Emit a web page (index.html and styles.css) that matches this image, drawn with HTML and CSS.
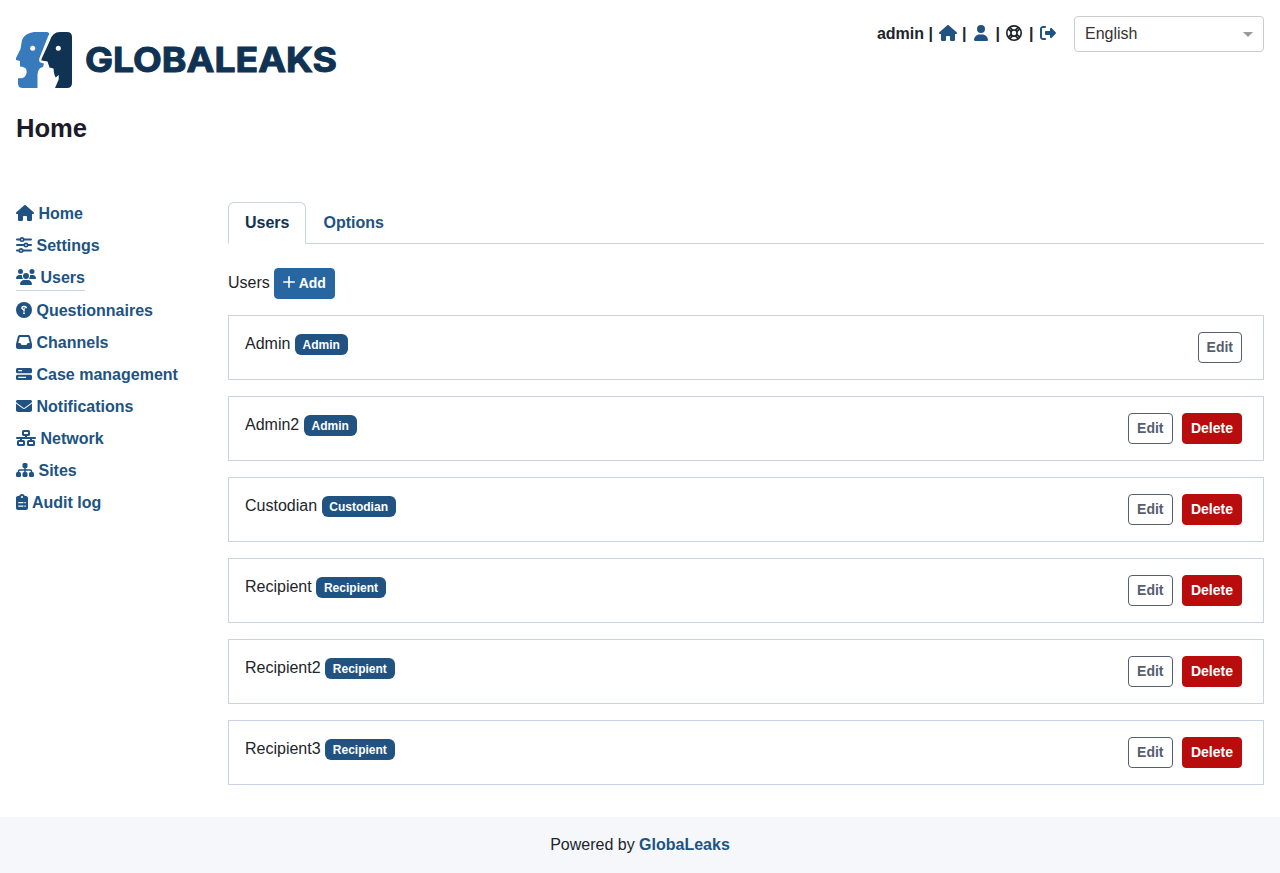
FILE: index.html
```html
<!DOCTYPE html>
<html lang="en">
<head>
<meta charset="utf-8">
<title>GlobaLeaks</title>
<link rel="stylesheet" href="styles.css">
</head>
<body>
<svg class="sprite" aria-hidden="true">
  <symbol id="house" viewBox="0 0 576 512"><path d="M575.8 255.5c0 18-15 32.1-32 32.1h-32l.7 160.2c0 2.7-.2 5.4-.5 8.1V472c0 22.1-17.9 40-40 40H392c-22.1 0-40-17.9-40-40V384c0-17.7-14.3-32-32-32H256c-17.7 0-32 14.3-32 32v88c0 22.1-17.9 40-40 40H104c-22.1 0-40-17.9-40-40V287.600H32c-18 0-32-14-32-32.100c0-9 3-17 10-24L266.400 8c7-7 15-8 22-8s15 2 21 7L564.800 231.500c8 7 12 15 11 24z"/></symbol>
  <symbol id="user" viewBox="0 0 448 512"><path d="M224 256A128 128 0 1 0 224 0a128 128 0 1 0 0 256zm-45.700 48C79.800 304 0 383.800 0 482.300C0 498.700 13.300 512 29.700 512H418.300c16.400 0 29.700-13.300 29.700-29.700C448 383.800 368.200 304 269.700 304H178.300z"/></symbol>
  <symbol id="ring" viewBox="0 0 512 512"><g fill="none" stroke="currentColor" stroke-width="52"><circle cx="256" cy="256" r="230"/><circle cx="256" cy="256" r="98"/><path d="M76 122l96 96M122 76l96 96M436 122l-96 96M390 76l-96 96M76 390l96-96M122 436l96-96M436 390l-96-96M390 436l-96-96"/></g></symbol>
  <symbol id="logout" viewBox="0 0 512 512"><path d="M377.900 105.900L500.700 228.700c7.200 7.200 11.300 17.100 11.300 27.300s-4.100 20.100-11.300 27.300L377.900 406.100c-6.400 6.400-15 9.900-24 9.900c-18.700 0-33.900-15.200-33.900-33.900v-62.100H192c-17.700 0-32-14.300-32-32v-64c0-17.700 14.300-32 32-32h128v-62.100c0-18.700 15.200-33.900 33.900-33.900c9 0 17.600 3.600 24 9.900zM160 96H96c-17.700 0-32 14.300-32 32v256c0 17.700 14.300 32 32 32h64c17.700 0 32 14.300 32 32s-14.300 32-32 32H96c-53 0-96-43-96-96V128C0 75 43 32 96 32h64c17.700 0 32 14.300 32 32s-14.300 32-32 32z"/></symbol>
  <symbol id="sliders" viewBox="0 0 512 512"><g fill="none" stroke="currentColor" stroke-width="62" stroke-linecap="round"><path d="M31 80h105M248 80h233M31 256h233M376 256h105M31 432h73M216 432h265"/><g stroke-width="52"><circle cx="192" cy="80" r="54"/><circle cx="320" cy="256" r="54"/><circle cx="160" cy="432" r="54"/></g></g></symbol>
  <symbol id="users" viewBox="0 0 640 512"><path d="M144 0a80 80 0 1 1 0 160A80 80 0 1 1 144 0zM512 0a80 80 0 1 1 0 160A80 80 0 1 1 512 0zM0 298.700C0 239.800 47.800 192 106.700 192h42.700c15.900 0 31 3.500 44.600 9.700c-1.300 7.200-1.900 14.700-1.900 22.300c0 38.200 16.800 72.500 43.300 96H21.300C9.600 320 0 310.400 0 298.700zM405.300 320c26.600-23.500 43.300-57.800 43.300-96c0-7.600-.7-15-1.900-22.300c13.600-6.300 28.700-9.700 44.600-9.700h42.700C592.200 192 640 239.800 640 298.700c0 11.800-9.600 21.300-21.300 21.300zM224 224a96 96 0 1 1 192 0 96 96 0 1 1-192 0zM128 485.300C128 411.700 187.700 352 261.300 352h117.400C452.300 352 512 411.700 512 485.300c0 14.700-11.900 26.700-26.700 26.700H154.700c-14.700 0-26.700-11.900-26.700-26.700z"/></symbol>
  <symbol id="question" viewBox="0 0 512 512"><circle cx="256" cy="256" r="256"/><path d="M330 180q-12-34-52-34h-40q-48 0-48 42 0 26 29 40l37 20v40" fill="none" stroke="#fff" stroke-width="46" stroke-linecap="round"/><path d="M250 200h50" stroke="#fff" stroke-width="30"/><circle cx="256" cy="356" r="30" fill="#fff"/></symbol>
  <symbol id="inbox" viewBox="0 0 512 512"><path fill-rule="evenodd" d="M121 32C91.600 32 66 52 58.900 80.500L1.900 308.400C.6 313.500 0 318.700 0 323.900V416c0 35.300 28.700 64 64 64h384c35.300 0 64-28.700 64-64v-92.100c0-5.200-.6-10.400-1.900-15.500l-57-227.900C446 52 420.400 32 391 32zm0 64h270l48 192h-51.200c-12.100 0-23.200 6.800-28.600 17.700l-14.300 28.600c-5.400 10.800-16.500 17.700-28.600 17.700H195.800c-12.100 0-23.200-6.800-28.600-17.700l-14.300-28.600c-5.400-10.800-16.500-17.700-28.600-17.700H73z"/></symbol>
  <symbol id="bars" viewBox="0 0 512 512"><path fill-rule="evenodd" d="M48 64H464q48 0 48 48v72q0 48-48 48H48q-48 0-48-48v-72q0-48 48-48zM72 128v40h120v-40zM48 280H464q48 0 48 48v72q0 48-48 48H48q-48 0-48-48v-72q0-48 48-48zM72 344v40h248v-40z"/></symbol>
  <symbol id="mail" viewBox="0 0 512 512"><path d="M48 64C21.500 64 0 85.500 0 112c0 15.100 7.100 29.300 19.200 38.400l217.600 163.200c11.400 8.500 27 8.500 38.400 0l217.600-163.200c12.100-9.100 19.200-23.300 19.200-38.400c0-26.500-21.500-48-48-48zM0 176v208c0 35.300 28.700 64 64 64h384c35.300 0 64-28.700 64-64V176L294.400 339.200c-22.800 17.100-54 17.100-76.800 0z"/></symbol>
  <symbol id="network" viewBox="0 0 640 512"><g fill="none" stroke="currentColor" stroke-width="64"><rect x="224" y="32" width="192" height="128" rx="20"/><rect x="64" y="352" width="192" height="128" rx="20"/><rect x="384" y="352" width="192" height="128" rx="20"/><path d="M320 160v96M160 350v-94M480 350v-94M32 256h576" stroke-linecap="round"/></g></symbol>
  <symbol id="sitemap" viewBox="0 0 576 512"><rect x="208" y="32" width="160" height="160" rx="48"/><rect x="0" y="320" width="160" height="160" rx="48"/><rect x="208" y="320" width="160" height="160" rx="48"/><rect x="416" y="320" width="160" height="160" rx="48"/><path d="M288 180v150M80 330v-34q0-40 40-40h336q40 0 40 40v34" fill="none" stroke="currentColor" stroke-width="48"/></symbol>
  <symbol id="clipboard" viewBox="0 0 384 512"><path fill-rule="evenodd" d="M192 0c-41.800 0-77.400 26.700-90.500 64H64C28.700 64 0 92.700 0 128v320c0 35.300 28.700 64 64 64h256c35.300 0 64-28.700 64-64V128c0-35.300-28.700-64-64-64h-37.500C269.400 26.700 233.800 0 192 0zM192 64a32 32 0 1 1 0 64 32 32 0 1 1 0-64zM72 256h164v36H72zM268 256h44v36h-44zM72 368h164v36H72zM268 368h44v36h-44z"/></symbol>
</svg>

<header class="header">
  <a class="logo"><svg width="322" height="56" viewBox="0 0 322 56">
    <path fill="#377bbc" d="M18 0H30Q35 0 32 4.500L23.300 26.500Q22.500 30.500 26 31L28 31.500L27 35Q22 36 21.500 42V56H7Q2 56 2 51.500V46.500L3 46Q6 47 8.500 45Q12 41 10 37Q9 35 4 34.500V29L0 28V26L4.500 17L6 8Q9 1 18 0Z"/>
    <circle cx="16.700" cy="16.300" r="2.500" fill="#fff"/>
    <path fill="#103253" d="M44 0H51Q56 0 56 5V51Q56 56 51 56H39L42.700 47.500V43L39.700 45.500Q38 43 37.500 36.500L33.500 35.500L31.500 29.500L25.500 28.500V27L33.500 9.500Q36 0 44 0Z"/>
    <circle cx="42.300" cy="16.300" r="2.500" fill="#fff"/>
    <text class="wordmark" x="69" y="40.300" textLength="252" lengthAdjust="spacingAndGlyphs">GLOBALEAKS</text>
  </svg></a>
  <div class="tools">
    <div class="account">
      <span>admin</span><span>|</span><svg class="icon w18 home"><use href="#house"/></svg><span>|</span><svg class="icon person"><use href="#user"/></svg><span>|</span><svg class="icon help"><use href="#ring"/></svg><span>|</span><svg class="icon exit"><use href="#logout"/></svg>
    </div>
    <div class="language"><span>English</span><i class="caret"></i></div>
  </div>
</header>
<h1 class="title">Home</h1>

<div class="layout">
  <nav class="sidebar">
    <a><svg class="icon w18"><use href="#house"/></svg>Home</a>
    <a><svg class="icon"><use href="#sliders"/></svg>Settings</a>
    <a class="current"><svg class="icon w20"><use href="#users"/></svg>Users</a>
    <a><svg class="icon"><use href="#question"/></svg>Questionnaires</a>
    <a><svg class="icon"><use href="#inbox"/></svg>Channels</a>
    <a><svg class="icon"><use href="#bars"/></svg>Case management</a>
    <a><svg class="icon"><use href="#mail"/></svg>Notifications</a>
    <a><svg class="icon w20"><use href="#network"/></svg>Network</a>
    <a><svg class="icon w18"><use href="#sitemap"/></svg>Sites</a>
    <a><svg class="icon w12"><use href="#clipboard"/></svg>Audit log</a>
  </nav>
  <main class="content">
    <div class="tabs"><a class="tab active">Users</a><a class="tab">Options</a></div>
    <div class="heading"><span>Users</span><button class="btn add"><svg class="plus" viewBox="0 0 12 12"><path d="M6 .2v11.600M.2 6h11.600"/></svg>Add</button></div>
    <div class="cards">
      <div class="card"><div class="who">Admin <span class="badge">Admin</span></div><div class="actions"><button class="btn edit">Edit</button></div></div>
      <div class="card"><div class="who">Admin2 <span class="badge">Admin</span></div><div class="actions"><button class="btn edit">Edit</button><button class="btn delete">Delete</button></div></div>
      <div class="card"><div class="who">Custodian <span class="badge">Custodian</span></div><div class="actions"><button class="btn edit">Edit</button><button class="btn delete">Delete</button></div></div>
      <div class="card"><div class="who">Recipient <span class="badge">Recipient</span></div><div class="actions"><button class="btn edit">Edit</button><button class="btn delete">Delete</button></div></div>
      <div class="card"><div class="who">Recipient2 <span class="badge">Recipient</span></div><div class="actions"><button class="btn edit">Edit</button><button class="btn delete">Delete</button></div></div>
      <div class="card"><div class="who">Recipient3 <span class="badge">Recipient</span></div><div class="actions"><button class="btn edit">Edit</button><button class="btn delete">Delete</button></div></div>
    </div>
  </main>
</div>
<footer class="footer">Powered by <a>GlobaLeaks</a></footer>
</body>
</html>
```
FILE: styles.css
```css
* { box-sizing: border-box; }
body { margin: 0; background: #fff; color: #212529; font: 16px/24px "Liberation Sans", Arial, sans-serif; }
.sprite { display: block; width: 0; height: 0; }
a { color: #205382; font-weight: 700; }

.icon { flex: none; width: 16px; height: 16px; margin-bottom: 2px; fill: currentColor; color: #205382; }
.w12 { width: 12px; margin-right: -.5px; }
.w18 { width: 18px; }
.w20 { width: 20px; }

.header { display: flex; justify-content: space-between; height: 88px; padding: 16px 16px 0; }
.logo { padding-top: 16px; height: 72px; }
.logo svg { display: block; }
.wordmark { font: 700 34.500px Inter, sans-serif; fill: #103253; stroke: #103253; stroke-width: 1px; }
.tools { display: flex; align-items: flex-start; gap: 17px; }
.account { display: flex; align-items: center; gap: 4.500px; height: 35px; font-weight: 700; }
.home { margin-left: 1px; margin-right: 1px; }
.person { width: 14px; margin-left: 3px; margin-right: 3px; }
.help { margin-left: 1px; margin-right: 3px; color: #212529; }
.exit { margin-left: 2px; margin-right: 1px; }
.language { display: flex; align-items: center; justify-content: space-between; width: 190px; height: 36px; padding: 0 10px; border: 1px solid #ccc; border-radius: 4px; color: #333; }
.caret { border: 5px solid transparent; border-top-color: #999; border-bottom: 0; }

.title { margin: 25px 16px 0; font-size: 25.600px; line-height: 31px; font-weight: 700; color: #1b1b2b; }

.layout { display: flex; padding: 58px 16px 32px; }
.sidebar { display: flex; flex-direction: column; align-items: flex-start; gap: 8px; width: 212px; }
.sidebar a { display: flex; align-items: center; gap: 4.500px; }
.sidebar .current { border-bottom: 1px solid #c8d3e3; }

.content { flex: 1; }
.tabs { display: flex; height: 42px; border-bottom: 1px solid #c8d3e3; }
.tab { height: 42px; padding: 8px 16px; border: 1px solid transparent; }
.active { color: #103253; background: #fff; border-color: #c8d3e3; border-bottom-color: #fff; border-radius: 6px 6px 0 0; }
.heading { display: flex; align-items: flex-start; gap: 4.400px; padding: 24px 0 16px; }
.heading span { padding-top: 3px; }

.btn { height: 31px; padding: 4px 8px; border: 1px solid; border-radius: 4px; font: 700 14px/21px "Liberation Sans", Arial, sans-serif; }
.add { display: flex; align-items: center; gap: 3.500px; color: #fff; background: #2866a2; border-color: #2866a2; padding-right: 8.500px; }
.plus { width: 12px; height: 12px; margin-bottom: 3px; fill: none; stroke: #fff; stroke-width: 1.600; }
.edit { color: #565e70; background: #fff; border-color: #565e70; }
.delete { color: #fff; background: #b90d0d; border-color: #b90d0d; }

.cards { display: flex; flex-direction: column; gap: 16px; }
.card { display: flex; justify-content: space-between; height: 65px; padding: 16px 21px 16px 16px; border: 1px solid #c8d3e3; }
.actions { display: flex; gap: 9.450px; }
.badge { display: inline-block; height: 21px; padding: 5px 7.800px 4px; border-radius: 6px; background: #205382; color: #fff; font-size: 12px; line-height: 12px; font-weight: 700; vertical-align: baseline; }

.footer { height: 56px; padding: 16px; text-align: center; background: #f5f7fb; }
```
